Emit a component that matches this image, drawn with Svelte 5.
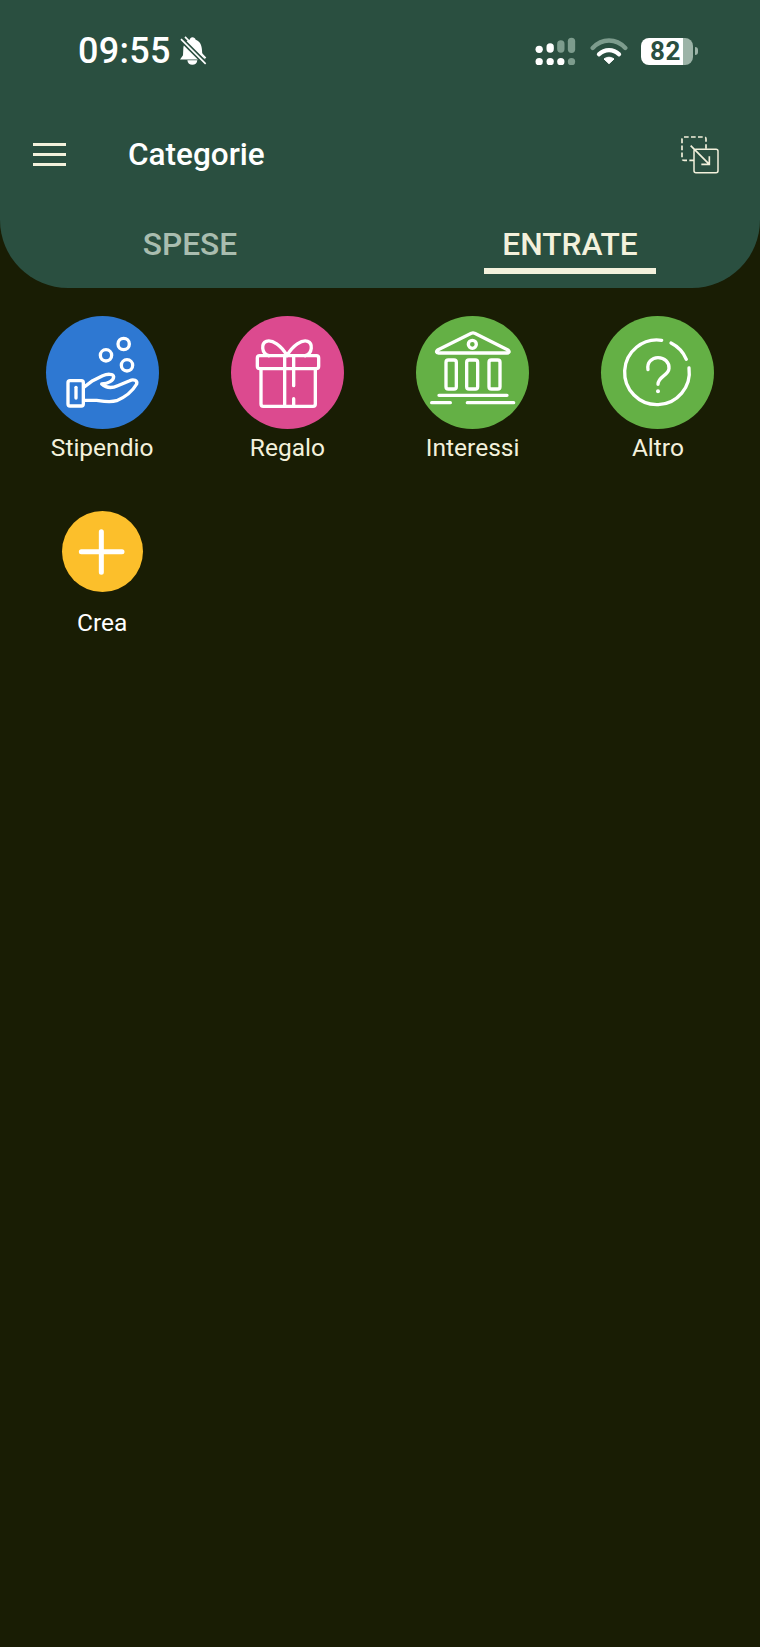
<script>
  const cats = [
    { name: 'Stipendio', color: '#2e78d2', icon: 'hand' },
    { name: 'Regalo', color: '#dc4a8f', icon: 'gift' },
    { name: 'Interessi', color: '#64b045', icon: 'bank' },
    { name: 'Altro', color: '#64b045', icon: 'help' },
    { name: 'Crea', color: '#fcbf2b', icon: 'plus' }
  ];
</script>

<div class="page">
  <header class="top">
    <div class="status">
      <div class="clock">
        <span class="time">09:55</span>
        <svg class="bell" viewBox="325 15 90 95" aria-hidden="true">
          <path d="M368 21c5 0 9 3 10 8 14 5 18 17 19 31l1 15 9 13H331l9-13 1-21c1-14 10-23 19-25 1-5 4-8 8-8z" fill="#fff"/>
          <path d="M353 90h30c-1 9-7 14-15 14s-14-5-15-14z" fill="#fff"/>
          <path d="M332 25l76 76" stroke="#2a4f40" stroke-width="15" fill="none"/>
          <path d="M334 27l74 74M346 20l62 64" stroke="#fff" stroke-width="5" fill="none"/>
        </svg>
      </div>
      <div class="sys">
        <svg class="signal" viewBox="43 26 122 84" aria-hidden="true">
          <g fill="#fff">
            <circle cx="55" cy="63" r="11"/><rect x="77" y="45" width="22" height="28" rx="11"/>
            <circle cx="55" cy="100" r="11"/><circle cx="88" cy="100" r="11"/><circle cx="120" cy="100" r="11"/>
          </g>
          <g fill="#7d9c8d">
            <rect x="109" y="36" width="22" height="37" rx="11"/><rect x="141" y="28" width="22" height="46" rx="11"/>
            <circle cx="152" cy="100" r="11"/>
          </g>
        </svg>
        <svg class="wifi" viewBox="205 24 112 84" aria-hidden="true">
          <path d="M212 57c28-30 70-30 98 0" stroke="#7d9c8d" stroke-width="13" fill="none" stroke-linecap="round"/>
          <path d="M231 76c17-17 43-17 60 0" stroke="#fff" stroke-width="13" fill="none" stroke-linecap="round"/>
          <path d="M246 90c9-7 21-7 30 0l-15 14z" fill="#fff" stroke="#fff" stroke-width="3" stroke-linejoin="round"/>
        </svg>
        <div class="battery">
          <div class="cell-body"><span>82</span></div>
          <i class="nub"></i>
        </div>
      </div>
    </div>

    <div class="toolbar">
      <button class="menu" aria-label="menu"><i></i><i></i><i></i></button>
      <h1>Categorie</h1>
      <svg class="swap" viewBox="600 342 120 120" aria-hidden="true">
        <path d="M642 418h-30q-6 0-6-6v-58q0-6 6-6h60q6 0 6 6v30" fill="none" stroke="#f3f1dc" stroke-width="5" stroke-dasharray="14 7"/>
        <rect x="642" y="385" width="72" height="70" rx="6" fill="#2a4f40" stroke="#f3f1dc" stroke-width="4.5"/>
        <path d="M632 374l56 56M688 406v24h-24" fill="none" stroke="#f3f1dc" stroke-width="5"/>
      </svg>
    </div>

    <nav class="tabs">
      <div class="tab">SPESE</div>
      <div class="tab active">ENTRATE</div>
    </nav>
  </header>

  <main class="grid">
    {#each cats as c}
      <div class="item" class:small={c.icon === 'plus'}>
        <div class="disc" style="background:{c.color}">
          {#if c.icon === 'hand'}
            <svg viewBox="47 34 339 339" aria-hidden="true">
              <rect x="113" y="228" width="46" height="76" rx="6"/>
              <path d="M137 248v32"/>
              <path d="M160 248l27-20 30-15c14-6 32-6 33 3 0 12-16 20-36 22 14 12 33 12 48 5l36-15c12-6 24 0 21 10-14 24-36 40-60 50-20 6-40 2-60-1h-39"/>
              <circle cx="227" cy="152" r="17"/><circle cx="280" cy="118" r="17"/><circle cx="290" cy="182" r="17"/>
            </svg>
          {:else if c.icon === 'gift'}
            <svg viewBox="47 34 339 339" aria-hidden="true">
              <path d="M215 153C198 122 170 104 153 110c-16 6-15 36 7 43M215 153c17-31 45-49 62-43 16 6 15 36-7 43"/>
              <rect x="126" y="153" width="184" height="39" rx="7"/>
              <path d="M137 192v106q0 7 7 7h149q7 0 7-7V192"/>
              <path d="M208 153v152M235 153v90M235 282v23"/>
            </svg>
          {:else if c.icon === 'bank'}
            <svg viewBox="47 34 339 339" aria-hidden="true">
              <path d="M213 86q5-3 10 0l100 50q8 8-3 9H115q-11-1-3-9z"/>
              <circle cx="216" cy="119" r="12"/>
              <rect x="137" y="166" width="31" height="87" rx="7"/>
              <rect x="199" y="166" width="33" height="87" rx="7"/>
              <rect x="266" y="166" width="33" height="87" rx="7"/>
              <path d="M116 272h204M94 294h56M201 294h139"/>
            </svg>
          {:else if c.icon === 'help'}
            <svg viewBox="34 34 339 339" aria-hidden="true">
              <path d="M216 107A97 97 0 1 0 298 190"/>
              <path d="M244 115A97 97 0 0 1 290 164"/>
              <path d="M175 195c-4-22 12-36 30-36 20 0 34 14 33 32-1 22-33 24-33 48"/>
              <circle class="dot" cx="205" cy="260" r="4"/>
            </svg>
          {:else}
            <svg class="plus" viewBox="0 0 243 243" aria-hidden="true">
              <path d="M58 122h122M118 62v122"/>
            </svg>
          {/if}
        </div>
        <span class="label">{c.name}</span>
      </div>
    {/each}
  </main>
</div>

<style>
  :global(body) {
    margin: 0;
    background: #191d04;
  }
  .page {
    height: 1647px;
    background: #191d04;
    font-family: Roboto, "Liberation Sans", sans-serif;
    overflow: hidden;
  }
  .top {
    height: 288px;
    box-sizing: border-box;
    background: #2a4f40;
    border-radius: 0 0 68px 68px;
    display: flex;
    flex-direction: column;
  }
  .status {
    height: 102px;
    box-sizing: border-box;
    padding: 0 62px 0 78px;
    display: flex;
    justify-content: space-between;
    align-items: center;
  }
  .clock {
    display: flex;
    align-items: center;
    gap: 7px;
  }
  .time {
    font: 500 36px/40px Roboto, sans-serif;
    letter-spacing: 0.3px;
    color: #fff;
  }
  .bell {
    width: 30px;
    height: 32px;
  }
  .sys {
    display: flex;
    align-items: center;
  }
  .signal {
    width: 41px;
    height: 28px;
  }
  .wifi {
    width: 38px;
    height: 28px;
    margin-left: 14px;
  }
  .battery {
    display: flex;
    align-items: center;
    margin-left: 13px;
  }
  .cell-body {
    width: 52px;
    height: 27px;
    box-sizing: border-box;
    padding-left: 9px;
    border-radius: 8px;
    background: linear-gradient(90deg, #fff 0 42px, #9cb3a7 42px);
    font: 700 26px/27px Roboto, sans-serif;
    letter-spacing: 0.6px;
    color: #2a4f40;
  }
  .nub {
    width: 3px;
    height: 8px;
    margin-left: 2px;
    border-radius: 0 3px 3px 0;
    background: #9cb3a7;
  }
  .toolbar {
    height: 105px;
    padding: 0 40px 0 33px;
    display: flex;
    align-items: center;
  }
  .menu {
    width: 33px;
    padding: 0;
    border: 0;
    background: none;
    display: flex;
    flex-direction: column;
    gap: 6.5px;
  }
  .menu i {
    display: block;
    height: 3.5px;
    background: #f3f1dc;
  }
  h1 {
    margin: 0 auto 0 62px;
    font: 500 31.5px/40px Roboto, sans-serif;
    color: #fff;
  }
  .swap {
    width: 40px;
    height: 40px;
  }
  .tabs {
    display: grid;
    grid-template-columns: 1fr 1fr;
    height: 81px;
  }
  .tab {
    justify-self: center;
    height: 67px;
    box-sizing: border-box;
    padding-top: 18px;
    width: 172px;
    text-align: center;
    font: 500 31.7px/40px Roboto, sans-serif;
    white-space: nowrap;
    color: #a9bdaf;
    border-bottom: 6px solid transparent;
  }
  .tab.active {
    color: #f3f1dc;
    border-bottom-color: #f3f1dc;
  }
  .grid {
    display: grid;
    grid-template-columns: repeat(4, 1fr);
    row-gap: 35px;
    padding: 28px 9.5px 0;
  }
  .item {
    display: flex;
    flex-direction: column;
    align-items: center;
  }
  .disc {
    width: 113px;
    height: 113px;
    border-radius: 50%;
    margin-bottom: 5px;
  }
  .small .disc {
    width: 81px;
    height: 81px;
    margin: 14px 0 17px;
  }
  .disc svg {
    display: block;
    width: 100%;
    height: 100%;
    fill: none;
    stroke: #fff;
    stroke-width: 10;
    stroke-linecap: round;
    stroke-linejoin: round;
  }
  .disc svg .dot {
    fill: #fff;
    stroke-width: 4;
  }
  .disc svg.plus {
    stroke-width: 15;
  }
  .label {
    font: 400 24.5px/28px Roboto, sans-serif;
    color: #f3f1dc;
  }
  .small .label {
    color: #fff;
  }
</style>
